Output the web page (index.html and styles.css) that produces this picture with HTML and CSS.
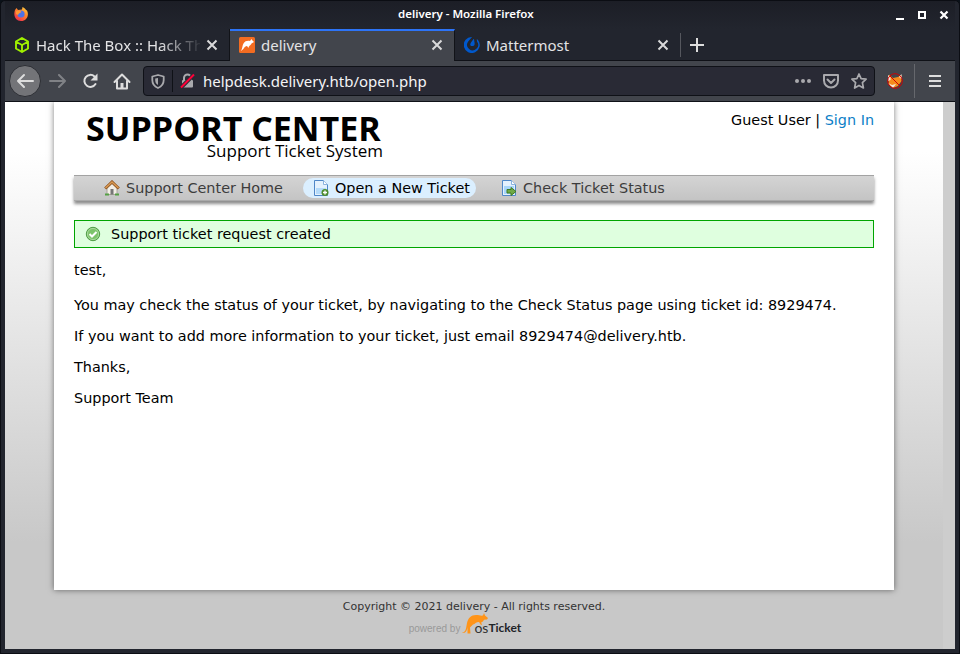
FILE: index.html
```
<!DOCTYPE html>
<html lang="en">
<head>
<meta charset="utf-8">
<title>delivery</title>
<link rel="stylesheet" href="styles.css">
</head>
<body>
<div class="window">
  <header class="titlebar">
    <svg class="fox" width="16" height="16" viewBox="0 0 16 16"><defs><linearGradient id="fx" x1="1" y1="0" x2="0.3" y2="1"><stop offset="0" stop-color="#ffe14a"/><stop offset=".45" stop-color="#ff8a2a"/><stop offset="1" stop-color="#f0304c"/></linearGradient></defs><path d="M2 4 3.5 2 5 4l4-.5L9.500 1c2 .8 3 2 3.500 3l1 .5c2.500 5-.5 10.500-6 10.500C2.500 15 0 9.500 2 4z" fill="url(#fx)"/><circle cx="8" cy="8" r="3.600" fill="#4d72e8"/><path d="M3 5l4-.5L8.500 6 6 7.500 5 9 3 8z" fill="#ff9633"/></svg>
    <div class="window-title">delivery - Mozilla Firefox</div>
    <div class="controls">
      <svg width="54" height="12" viewBox="0 0 54 12"><g stroke="#fff" fill="none"><path d="M1 10h8" stroke-width="2"/><path d="M24 3h6v6h-6z" stroke-width="2"/><path d="m45.500 2.500 7 7m0-7-7 7" stroke-width="2.200"/></g></svg>
    </div>
  </header>
  <nav class="tabs">
    <div class="tab">
      <svg width="16" height="16" viewBox="0 0 16 16"><path d="M8 1l6 3.500v7L8 15l-6-3.500v-7zM2.500 5 8 8l5.500-3M8 8v6.500" fill="none" stroke="#9fef00" stroke-width="1.900"/></svg>
      <span class="label fade">Hack The Box :: Hack The</span>
      <svg class="close" width="12" height="12" viewBox="0 0 12 12"><path d="m1.500 1.500 9 9m0-9-9 9"/></svg>
    </div>
    <div class="tab active">
      <svg width="16" height="16" viewBox="0 0 16 16"><rect width="16" height="16" rx="1.500" fill="#f36c21"/><path d="M1.500 14c2-1 1.500-5 3-7.500C6 4 8.500 3.500 11 4l1.500-2 .5 1 2 2-2.500 1.500C11.500 9 10 8 9.500 11L8 9C5 9 5 13 1.500 14z" fill="#fff"/></svg>
      <span class="label delivery">delivery</span>
      <svg class="close" width="12" height="12" viewBox="0 0 12 12"><path d="m1.500 1.500 9 9m0-9-9 9"/></svg>
    </div>
    <div class="tab">
      <svg width="16" height="16" viewBox="0 0 16 16"><path d="M8 0A8 8 0 1 0 14 3l-1.200-1 .2 2.500A5.500 5.500 0 1 1 4 4.800z" fill="#0058cc"/><path d="M9.500 2 7 5.500C5 8.500 7.500 9.500 9 9c2.500-.8 1.500-3 1-7z" fill="#0058cc"/></svg>
      <span class="label">Mattermost</span>
      <svg class="close" width="12" height="12" viewBox="0 0 12 12"><path d="m1.500 1.500 9 9m0-9-9 9"/></svg>
    </div>
    <div class="newtab"><svg width="14" height="14" viewBox="0 0 14 14"><path d="M7 0v14M0 7h14" stroke="#ddd" stroke-width="2"/></svg></div>
  </nav>
  <div class="toolbar">
    <div class="back"><svg width="18" height="16" viewBox="0 0 18 16"><path d="M17 8H2m6-6L2 8l6 6" class="ln"/></svg></div>
    <svg class="forward" width="18" height="16" viewBox="0 0 18 16"><path d="M1 8h15m-6-6 6 6-6 6" class="ln"/></svg>
    <svg class="reload" width="16" height="16" viewBox="0 0 16 16"><path d="M12.500 3.500A6 6 0 1 0 13.500 11" class="ln"/><path d="M15.500.5v7h-7z" fill="#ddd"/></svg>
    <svg class="home" width="18" height="17" viewBox="0 0 18 17"><path d="m1.500 9 7.500-7.500L16.500 9M4 8v7.500h10V8" class="ln"/><path d="M7.500 15v-5h3v5z" fill="#ddd"/></svg>
    <div class="urlbar">
      <div class="shield"><svg width="14" height="15" viewBox="0 0 14 15"><path d="M7 1 12.700 2.500V6c0 4-2 6.500-5.700 8-3.700-1.500-5.700-4-5.700-8V2.500z" fill="none" stroke="#a9a9ad" stroke-width="1.800" stroke-linejoin="round"/><path d="M7 4v7C5 10 4.200 8 4.200 6V4.600z" fill="#a9a9ad"/></svg></div>
      <svg class="lock" width="15" height="16" viewBox="0 0 15 16"><path d="M4 8V5a3.500 3.500 0 0 1 7 0v3" fill="none" stroke="#a9a9ad" stroke-width="2"/><rect x="2" y="7" width="11" height="7.500" rx="1" fill="#a9a9ad"/><path d="M1 14.500 14 1.500" stroke="#292a35" stroke-width="4"/><path d="M1 14.500 14 1.500" stroke="#ff0039" stroke-width="2"/></svg>
      <span class="url">helpdesk.delivery.htb/open.php</span>
      <svg width="74" height="18" viewBox="0 0 74 18"><g fill="#a9a9ad"><circle cx="3" cy="9" r="2"/><circle cx="9" cy="9" r="2"/><circle cx="15" cy="9" r="2"/></g><g fill="none" stroke="#a9a9ad" stroke-width="2" stroke-linejoin="round" stroke-linecap="round"><path d="M30 3h14v5.500a7 7 0 0 1-14 0z"/><path d="m33.500 7.500 3.500 3.500 3.500-3.500"/><path stroke-width="1.700" d="m65 2 2.100 4.700 5 .5-3.700 3.500 1 5.300-4.400-2.600L60.600 16l1-5.300-3.700-3.500 5-.5z"/></g></svg>
    </div>
    <svg class="proxy" width="16" height="16" viewBox="0 0 16 16"><path d="M2 1.500 6 5l5-1 3.500-2v6L11 13l-5 2-4.500-4z" fill="#f58b1c"/><path d="m1 2 2.500 2v3L1 8zM14.500 1v5L12 4zM1 10l4 2 4-1-3 4z" fill="#f2e6dc"/><circle cx="8" cy="8" r="7.300" fill="none" stroke="#d00000"/><path d="m3 3 10 10" stroke="#d00000"/></svg>
    <div class="menu"><svg width="12" height="12" viewBox="0 0 12 12"><path d="M0 1h12M0 6h12M0 11h12" stroke="#ddd" stroke-width="2"/></svg></div>
  </div>
  <div class="viewport">
    <div class="page">
      <main class="container">
        <div class="head">
          <div class="logo"><div class="logo-main">SUPPORT CENTER</div><div class="logo-sub">Support Ticket System</div></div>
          <p class="user">Guest User | <a>Sign In</a></p>
        </div>
        <ul class="nav">
          <li class="n1"><svg width="16" height="16" viewBox="0 0 16 16"><path d="M3 8v6.500h10V8L8 3.500z" fill="#f3efe7" stroke="#a8a49b"/><path d="M1 14.500h4M11 14.500h4" stroke="#55a044" stroke-width="2"/><path d="M6.500 14.500V9h3v5.500z" fill="#777"/><path d="M1.200 8.500 8 2l6.800 6.500" fill="none" stroke="#8f5520" stroke-width="3"/><path d="M1.500 8 8 2l6.500 6" fill="none" stroke="#d99a55" stroke-width="1.500"/></svg><span>Support Center Home</span></li>
          <li class="n2"><svg width="16" height="16" viewBox="0 0 16 16"><path d="M1.500.5h9l4 4v11h-13z" fill="#e4f1fd" stroke="#4f87c8"/><path d="M3 8h10v6H3z" fill="#b5dbfa"/><path d="M10.500.5v4h4" fill="#fff" stroke="#8ab3df"/><circle cx="12" cy="12.500" r="3.500" fill="#4d8c2c"/><path d="M12 10.500v4M10 12.500h4" stroke="#fff" stroke-width="1.300"/></svg><span>Open a New Ticket</span></li>
          <li class="n3"><svg width="16" height="16" viewBox="0 0 16 16"><path d="M1.500.5h9l4 4v11h-13z" fill="#e4f1fd" stroke="#4f87c8"/><path d="M3 6h10v8H3z" fill="#a8d5fa"/><path d="M10.500.5v4h4" fill="#fff" stroke="#8ab3df"/><path d="M6 9.500h4V7.500l5 4-5 4v-2.500H6z" fill="#70aa45" stroke="#3f7b20"/></svg><span>Check Ticket Status</span></li>
        </ul>
        <div class="notice"><svg width="16" height="16" viewBox="0 0 16 16"><circle cx="8" cy="8" r="6.700" fill="#7cc36a" stroke="#4f9c45"/><circle cx="8" cy="8" r="5.600" fill="none" stroke="#b4deaa" stroke-width=".8"/><path d="m4.500 8 2.500 2.500 4.500-4.500" fill="none" stroke="#fff" stroke-width="2"/></svg><span>Support ticket request created</span></div>
        <div class="message">
          <p class="greet">test,</p>
          <p>You may check the status of your ticket, by navigating to the Check Status page using ticket id: 8929474.</p>
          <p>If you want to add more information to your ticket, just email 8929474@delivery.htb.</p>
          <p>Thanks,</p>
          <p>Support Team</p>
        </div>
      </main>
      <footer class="footer">
        <p>Copyright © 2021 delivery - All rights reserved.</p>
        <div class="powered"><span class="by">powered by</span><svg width="27" height="21" viewBox="0 0 27 21"><path d="M0 19c4 1 4-4 5-9C6 5 9 2 14 2c3 0 5 1 7 .5L22 0l1 2.500 3 2.500-1 1.500-3 .3c-1 2-2 2.500-3 2.700l1 2-1 .5-2-3c-3 0-4 2-6 2.500l-3 3 .5 6H5.500V14C5 18 3 21.500 0 19z" fill="#ff9418"/></svg><span class="os">os</span><b>Ticket</b></div>
      </footer>
    </div>
    <div class="scrollbar"></div>
  </div>
</div>
</body>
</html>
```
FILE: styles.css
```
* { box-sizing: border-box; }
body { margin: 0; background: #0b1119; overflow: hidden; }
p, ul { margin: 0; padding: 0; }
svg { display: block; flex: none; }
.window { width: 960px; height: 654px; border: 1px solid #0b0d13; border-top-width: 1px; border-radius: 5px 5px 0 0; background: #22252e; font-family: "Noto Sans", sans-serif; color: #e3e3e5; overflow: hidden; padding: 0 4px 4px; }
.titlebar { height: 28px; display: flex; align-items: center; position: relative; background: linear-gradient(#1c1e26, #22252e); }
.fox { margin-left: 8px; margin-top: -2px; }
.window-title { flex: 1; padding-left: 369px; font-size: 11.5px; font-weight: 600; color: #fff; line-height: 26px; height: 28px; white-space: nowrap; }
.controls { margin-right: 6px; }
.tabs { height: 32px; display: flex; background: #22252e; border-bottom: 1px solid #0f1117; }
.tab { width: 225px; height: 32px; display: flex; align-items: center; padding: 0 11px 0 9px; border-right: 1px solid #111318; font-size: 15px; }
.tab.active { background: #42454c; border-top: 2px solid #2d74f7; padding-bottom: 2px; }
.tab:nth-child(3) { border-right: 0; }
.label { flex: 1; margin-left: 6px; white-space: nowrap; overflow: hidden; line-height: 30px; }
.fade { -webkit-mask-image: linear-gradient(90deg, #000 75%, transparent 102%); mask-image: linear-gradient(90deg, #000 75%, transparent 102%); }
.close { margin-left: 6px; }
.close path { stroke: #d9d9da; stroke-width: 2; fill: none; }
.newtab { margin-top: 4px; height: 24px; border-left: 1px solid #55575e; padding: 5px 9px; }
.toolbar { height: 41px; background: #42454c; border-bottom: 1px solid #0f1117; display: flex; align-items: center; }
.ln { fill: none; stroke: #ddd; stroke-width: 2; stroke-linecap: round; stroke-linejoin: round; }
.back { width: 32px; height: 32px; margin-left: 4px; border-radius: 50%; background: #737478; border: 1px solid #2c2e34; display: flex; align-items: center; justify-content: center; }
.forward { margin-left: 8px; opacity: .4; }
.reload { margin-left: 15px; }
.home { margin-left: 15px; }
.urlbar { width: 732px; height: 30px; margin-left: 12px; border: 1px solid #0f1117; border-radius: 4px; background: #292a35; display: flex; align-items: center; padding-right: 6px; }
.shield { height: 22px; width: 29px; border-right: 1px solid #0f1117; padding: 4px 0 0 7px; }
.lock { margin-left: 7px; }
.url { flex: 1; margin-left: 8px; font-size: 15px; color: #f4f4f5; white-space: nowrap; }
.proxy { margin-left: 12px; }
.menu { margin-left: 11px; height: 34px; border-left: 1px solid #66686d; padding: 11px 14px; }
.viewport { display: flex; height: 547px; }
.page { width: 938px; height: 547px; overflow: hidden; background: linear-gradient(#fff 50px, #c8c8c8 440px); font-family: "DejaVu Sans", sans-serif; font-size: 14.4px; color: #000; }
.scrollbar { width: 12px; background: #cdcdcd; }
.container { width: 840px; height: 488px; margin: 0 auto 0 49px; padding: 0 20px; background: #fff; box-shadow: 0 0 6px rgba(0,0,0,.5); }
.head { height: 73px; display: flex; justify-content: space-between; }
.logo { margin-left: 12px; width: 297px; font-family: "Open Sans", sans-serif; white-space: nowrap; }
.logo-main { font-size: 34px; font-weight: 700; line-height: 40px; margin-top: 6px; }
.logo-sub { font-size: 17px; line-height: 20px; margin-top: -7px; text-align: right; }
.user { margin-top: 9px; line-height: 18px; }
.user a { color: #0d7fc7; }
.nav { height: 26px; list-style: none; display: flex; align-items: center; color: #3c3c3c; background: linear-gradient(#d4d4d4, #c4c4c4); border-top: 1px solid #a3a3a3; border-bottom: 1px solid #aaa; box-shadow: 0 3px 3px rgba(0,0,0,.45); }
.nav li { display: flex; align-items: center; gap: 6px; height: 20px; white-space: nowrap; }
.n1 { margin-left: 30px; width: 199px; }
.n2 { width: 173px; padding-left: 10px; border-radius: 10px; color: #000; background: #dbefff; }
.n3 { margin-left: 25px; }
.notice { height: 28px; margin-top: 19px; border: 1px solid #00a500; background: #dfffdf; display: flex; align-items: center; gap: 10px; padding-left: 10px; }
.message { margin-top: 13px; line-height: 18px; }
.message p { height: 18px; margin-bottom: 13px; white-space: nowrap; }
.message .greet { margin-bottom: 17px; }
.footer { width: 840px; margin-left: 49px; padding-top: 9px; color: #333; font-size: 11px; text-align: center; line-height: 16px; }
.powered { display: flex; justify-content: center; height: 20px; margin-left: -18px; font-family: Lato, sans-serif; }
.by { font-family: "Liberation Sans", sans-serif; font-size: 10px; color: #999; padding-top: 6px; margin-right: 2px; }
.powered svg { margin-top: -2px; margin-right: -15px; }
.os { font-size: 14px; padding-top: 5px; }
.powered b { font-size: 12px; padding-top: 5px; color: #1f2428; }
```
